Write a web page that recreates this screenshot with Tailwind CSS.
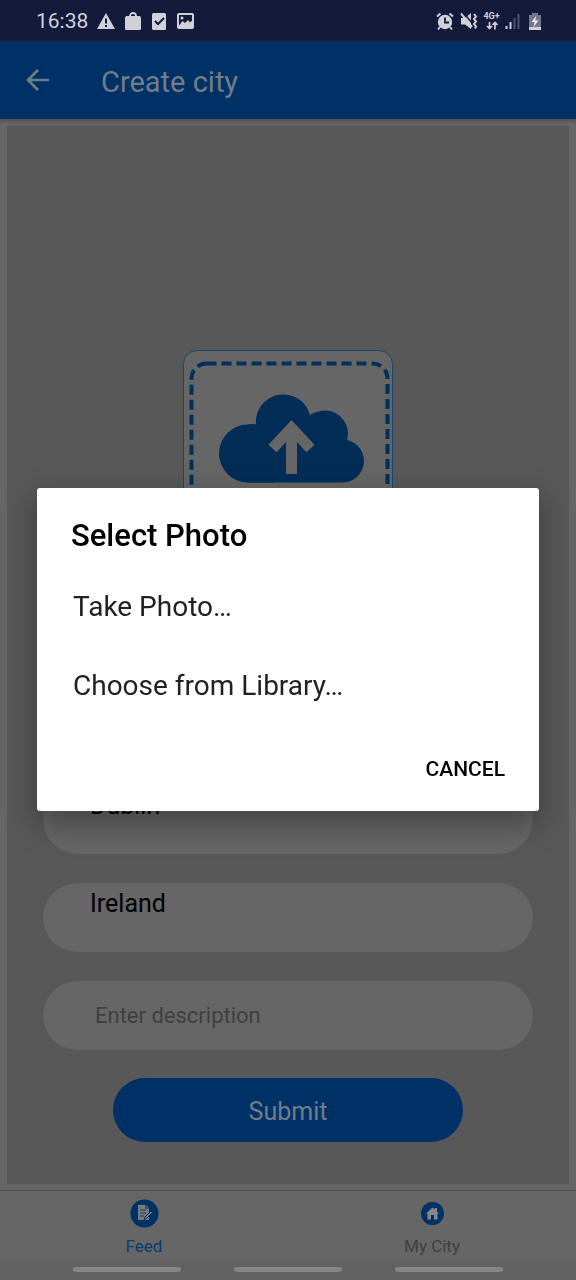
<!DOCTYPE html>
<html lang="en">
<head>
<meta charset="utf-8">
<meta name="viewport" content="width=device-width, initial-scale=1">
<title>Create city</title>
<script src="https://cdn.jsdelivr.net/npm/@tailwindcss/browser@4"></script>
</head>
<body class="relative flex min-h-screen flex-col bg-[#666666] font-['Roboto',sans-serif]">

  <!-- Status bar -->
  <div class="flex h-[41px] shrink-0 items-center justify-between bg-[#141a3a] pr-[34px] pl-9 text-[#d0d1d8]">
    <div class="flex items-center gap-2">
      <span class="text-[21px] leading-6">16:38</span>
      <svg class="size-[20px]" viewBox="0 0 20 20" fill="currentColor"><path fill-rule="evenodd" d="M10 2 19 18H1ZM9 7.5V12.500H11V7.500ZM9 14V16H11V14Z"/></svg>
      <svg class="h-[20px] w-[18px]" viewBox="0 0 18 20"><path fill="currentColor" d="M3 5H15Q17 5 17 7V17.500Q17 19 15.500 19H2.500Q1 19 1 17.500V7Q1 5 3 5Z"/><path d="M6 6V5A3 3 0 0 1 12 5V6" fill="none" stroke="currentColor" stroke-width="1.800"/></svg>
      <svg class="h-[20px] w-[18px]" viewBox="0 0 18 20"><rect x="2" y="2" width="14" height="17" rx="1.500" fill="currentColor"/><path d="m5 10 3 3 6-6" fill="none" stroke="#141a3a" stroke-width="2"/></svg>
      <svg class="h-[20px] w-[19px]" viewBox="0 0 19 20"><rect x="2" y="3" width="15" height="14" rx="1" fill="none" stroke="currentColor" stroke-width="2"/><circle cx="6" cy="7" r="1.500" fill="currentColor"/><path d="M3 14.500 6.500 10l2.500 2 3-3 2 2.500 2-2V17H3Z" fill="currentColor"/></svg>
    </div>
    <div class="flex items-center gap-1">
      <svg class="size-[20px]" viewBox="0 0 20 20"><path d="M2 5.500 5.500 2.500M18 5.500 14.500 2.500M5 16 3 18.500M15 16l2 2.500" stroke="currentColor" stroke-width="2"/><circle cx="10" cy="11" r="7.200" fill="currentColor"/><path d="M10 6.500V11.500H14" fill="none" stroke="#141a3a" stroke-width="1.800"/></svg>
      <svg class="size-[20px]" viewBox="0 0 20 20"><path d="M2 7H6L12 2V18L6 13.500H2Z" fill="currentColor"/><path d="M4 1 13 12" stroke="#141a3a" stroke-width="1.500"/><path d="M2 2.500 13 16" stroke="currentColor" stroke-width="2"/><path d="m15 3 2 2.500-2 2.500 2 2.500-2 2.500 2 2.500-1 2" fill="none" stroke="currentColor" stroke-width="2"/></svg>
      <div class="flex w-[17px] flex-col items-center">
        <span class="text-[9px] leading-[9px] font-bold">4G+</span>
        <svg class="h-[9px] w-[14px]" viewBox="0 0 14 9" fill="none" stroke="currentColor" stroke-width="1.700"><path d="M4.500 1V7M2 5l2.500 2.500L7 5M10 8.500V2M7.500 4 10 1.500 12.500 4"/></svg>
      </div>
      <svg class="h-[20px] w-[17px]" viewBox="0 0 17 20"><path d="M2.500 15V18M6.500 11V18" stroke="currentColor" stroke-width="2"/><path d="M10.500 7V18M14.500 3V18" stroke="#4d526d" stroke-width="2"/></svg>
      <svg class="ml-[3px] h-[20px] w-[14px]" viewBox="0 0 14 20"><path d="M4 2H10V4H13V19H1V4H4Z" fill="#737789"/><path d="M1 16H13V19H1Z" fill="currentColor"/><path d="M8 5 3.500 11H6.500L5.500 16 10.500 9.500H7.500Z" fill="#e8e8ec"/></svg>
    </div>
  </div>

  <!-- App bar -->
  <header class="flex h-[78px] shrink-0 items-center bg-[#003166] px-5 text-[#717d88] shadow-[0_2px_3px_#4c4f52]">
    <button type="button" aria-label="Back" class="flex size-9 items-center justify-center">
      <svg class="size-[26px]" viewBox="0 0 26 26" fill="none" stroke="currentColor" stroke-width="2.600"><path d="M24 13H3M13 3 3 13 13 23"/></svg>
    </button>
    <h1 class="ml-[45px] pt-1 text-[29px] leading-9">Create city</h1>
  </header>

  <!-- Form -->
  <main class="flex grow flex-col p-[7px] pb-[6px]">
    <form class="flex grow flex-col items-center justify-end bg-[#585858] px-9 pb-[42px]">
      <button type="button" aria-label="Upload photo" class="mb-[225px] h-[210px] w-[210px] rounded-[14px] border border-[#174878] bg-[#666666]">
        <svg class="size-full" viewBox="0 0 208 208">
          <rect x="7.500" y="12.500" width="196" height="182" rx="15" fill="none" stroke="#032f5c" stroke-width="4" stroke-dasharray="10 5"/>
          <path fill="#022d57" d="M64 131.500A29 29 0 0 1 63 74Q68 72.500 72 73.500A27.500 27.500 0 0 1 126 64Q133 59.500 142 59.500A23 23 0 0 1 163 89A21.500 21.500 0 0 1 159 131.500Z"/>
          <path fill="#022d57" d="M64 131.500A29 29 0 0 1 64 73.500H90V131.500Z"/>
          <path d="M107.500 123V77M88.500 97.500 107.500 77 126.500 97.500" fill="none" stroke="#666666" stroke-width="11"/>
        </svg>
      </button>
      <div class="flex w-full flex-col gap-[29px]">
        <input type="text" aria-label="City" value="Dublin" class="h-[69px] w-full rounded-full bg-[#666666] px-[47px] pb-[28px] text-[25px] leading-8 text-black">
        <input type="text" aria-label="Country" value="Ireland" class="h-[69px] w-full rounded-full bg-[#666666] px-[47px] pb-[28px] text-[25px] leading-8 text-black">
        <input type="text" aria-label="Description" placeholder="Enter description" class="h-[69px] w-full rounded-full bg-[#666666] px-[52px] text-[22px] leading-8 text-black placeholder:text-[#404040]">
      </div>
      <button type="submit" class="mt-7 h-[64px] w-[350px] rounded-full bg-[#003166] pt-1 text-[25px] leading-8 text-[#717d88]">Submit</button>
    </form>
  </main>

  <!-- Tab bar -->
  <nav class="flex h-[70px] shrink-0 border-t border-[#505050] text-[17px] leading-5">
    <a href="#feed" class="flex flex-1 flex-col items-center gap-2 pt-2 text-[#083c6f]">
      <svg class="size-[29px]" viewBox="0 0 29 29"><circle cx="14.500" cy="14.500" r="14" fill="#003166"/><path d="M8 6H16L19 9V21H8Z" fill="#777b7e"/><path d="M16 6V9H19M10 11H16M10 14H16M10 17H14M10 5.500H13" fill="none" stroke="#123c66" stroke-width="1.200"/><path d="m15 18 6-6 1.500 1.500-6 6-2.500 1Z" fill="#777b7e" stroke="#003166"/></svg>
      Feed
    </a>
    <a href="#my-city" class="flex flex-1 flex-col items-center gap-2 pt-2 text-[#3f3f3f]">
      <svg class="size-[29px]" viewBox="0 0 29 29"><circle cx="14.500" cy="14.500" r="11.500" fill="#003166"/><path d="m8 14.500 6.500-6 2 2V9H19v3.500l2 2H19.500V20.500H16V16H13V20.500H9.500V14.500Z" fill="#85888b"/></svg>
      My City
    </a>
  </nav>

  <!-- System gesture bar -->
  <div class="flex h-[20px] shrink-0 justify-around bg-[#626262] px-[46px] pt-[7px]">
    <span class="h-[5px] w-[108px] rounded-full bg-[#858585]"></span>
    <span class="h-[5px] w-[108px] rounded-full bg-[#858585]"></span>
    <span class="h-[5px] w-[108px] rounded-full bg-[#858585]"></span>
  </div>

  <!-- Photo picker dialog -->
  <div class="fixed inset-x-0 top-[41px] bottom-[22px] flex items-center justify-center px-[37px]">
    <div role="dialog" aria-modal="true" aria-labelledby="picker-title" class="flex w-full flex-col items-start rounded-[3px] bg-white px-[34px] pt-7 pb-[22px] shadow-[0_12px_32px_rgba(0,0,0,0.35)]">
      <h2 id="picker-title" class="text-[31px] leading-10 font-medium text-black">Select Photo</h2>
      <button type="button" class="mt-[31px] pl-[2px] text-[28px] leading-10 text-[#212121]">Take Photo…</button>
      <button type="button" class="mt-[39px] pl-[2px] text-[28px] leading-10 text-[#212121]">Choose from Library…</button>
      <button type="button" class="mt-[43px] self-end text-[21px] leading-10 font-medium text-black">CANCEL</button>
    </div>
  </div>
</body>
</html>
